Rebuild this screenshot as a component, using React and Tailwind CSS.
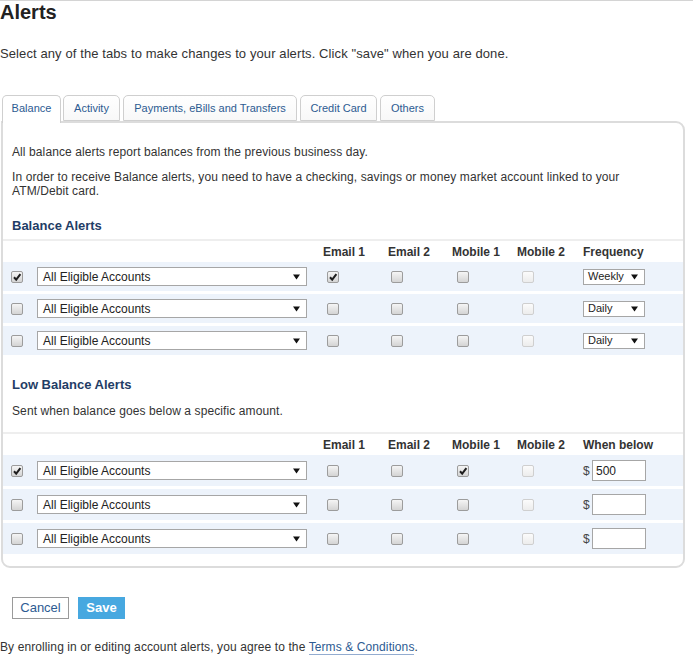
import React from "react";

const font = "font-['Liberation_Sans',Arial,sans-serif]";

function Box({ checked = false, disabled = false }) {
  return (
    <span
      className={
        "relative inline-block w-[12px] h-[12px] rounded-[2px] border bg-gradient-to-b " +
        (disabled
          ? "border-[#cfcfcf] from-[#fbfbfb] to-[#ececec]"
          : "border-[#9c9c9c] from-[#f5f5f5] to-[#d4d4d4]")
      }
    >
      {checked && (
        <svg className="absolute left-[0px] top-[0px]" width="10" height="10" viewBox="0 0 10 10">
          <path d="M2 5.2 L4.2 7.6 L8.4 2.2" fill="none" stroke="#1e1e1e" strokeWidth="2" strokeLinejoin="miter" />
        </svg>
      )}
    </span>
  );
}

function Arrow() {
  return (
    <svg width="7" height="6" viewBox="0 0 7 6">
      <path d="M0 0.5 L7 0.5 L3.5 5.5 Z" fill="#111" />
    </svg>
  );
}

function AccountSelect() {
  return (
    <div className="ml-[14px] w-[270px] h-[19px] border border-[#a6a6a6] bg-white flex items-center justify-between pl-[5px] pr-[6px] text-[12px] text-[#222]">
      <span>All Eligible Accounts</span>
      <Arrow />
    </div>
  );
}

function FreqSelect({ value }) {
  return (
    <div className="ml-[1px] w-[62px] h-[16px] border border-[#a6a6a6] bg-white flex items-center justify-between pl-[4px] pr-[6px] text-[11px] text-[#222]">
      <span>{value}</span>
      <Arrow />
    </div>
  );
}

function Cell({ children, w = "w-[65px]" }) {
  return <div className={w + " flex items-center"}>{children}</div>;
}

function Header({ last }) {
  return (
    <div className="flex items-center text-[12px] font-bold text-[#333]">
      <div className="w-[320px]" />
      <div className="w-[65px]">Email 1</div>
      <div className="w-[64px]">Email 2</div>
      <div className="w-[65px]">Mobile 1</div>
      <div className="w-[65px]">Mobile 2</div>
      <div className="ml-[1px]">{last}</div>
    </div>
  );
}

function Row({ h, first, e1, m1, right }) {
  return (
    <div className={h + " bg-[#edf3fb] flex items-center"}>
      <div className="w-[320px] flex items-center pl-[8px]">
        <Box checked={first} />
        <AccountSelect />
      </div>
      <Cell>
        <span className="ml-[4px] flex"><Box checked={e1} /></span>
      </Cell>
      <Cell w="w-[64px]">
        <span className="ml-[3px] flex"><Box /></span>
      </Cell>
      <Cell>
        <span className="ml-[5px] flex"><Box checked={m1} /></span>
      </Cell>
      <Cell>
        <span className="ml-[5px] flex"><Box disabled /></span>
      </Cell>
      {right}
    </div>
  );
}

function Amount({ value }) {
  return (
    <div className="flex items-center text-[12px] text-[#444]">
      <span className="ml-[1px] w-[9px]">$</span>
      <div className="w-[54px] h-[21px] border border-[#a6a6a6] bg-white flex items-center pl-[3px] text-[12px] text-[#222]">
        {value}
      </div>
    </div>
  );
}

const tabs = [
  { label: "Balance", w: "w-[59px]", ml: "" },
  { label: "Activity", w: "w-[57px]", ml: "ml-[2px]" },
  { label: "Payments, eBills and Transfers", w: "w-[174px]", ml: "ml-[3px]" },
  { label: "Credit Card", w: "w-[77px]", ml: "ml-[3px]" },
  { label: "Others", w: "w-[55px]", ml: "ml-[3px]" },
];

export default function App() {
  return (
    <div className={font + " w-[693px] h-[667px] bg-white border-t border-[#d4d4d4] text-[#333]"}>
      <h1 className="text-[20px] leading-[23px] font-bold text-[#222]">Alerts</h1>
      <p className="mt-[22px] text-[13px] leading-[15px] tracking-[0.1px] text-[#333]">
        Select any of the tabs to make changes to your alerts. Click "save" when you are done.
      </p>

      <div className="mt-[34px] flex items-start pl-[2px] h-[28px] -mb-[2px] relative z-10">
        {tabs.map((t, i) => (
          <div
            key={t.label}
            className={
              t.w +
              " " +
              t.ml +
              " flex items-center justify-center text-[11px] text-[#2d5b92] border border-[#cfcfcf] rounded-t-[5px] " +
              (i === 0
                ? "h-[28px] border-b-0 bg-white pb-[2px]"
                : "h-[26px] bg-gradient-to-b from-white to-[#f8f8f8]")
            }
          >
            {t.label}
          </div>
        ))}
      </div>

      <div className="ml-[1px] w-[684px] border-2 border-[#dcdcdc] rounded-tr-[9px] rounded-b-[9px] pb-[12px]">
        <p className="pl-[9px] pt-[22px] text-[12px] leading-[14px] tracking-[0.1px]">
          All balance alerts report balances from the previous business day.
        </p>
        <p className="pl-[9px] mt-[11px] text-[12px] leading-[14px] tracking-[0.1px]">
          In order to receive Balance alerts, you need to have a checking, savings or money market account linked to your
          <br />
          ATM/Debit card.
        </p>
        <h2 className="pl-[9px] mt-[20px] text-[13px] leading-[16px] font-bold text-[#1f3d66]">Balance Alerts</h2>
        <div className="mt-[5px] h-[2px] bg-[#eeeeee]" />
        <div className="h-[21px] flex items-center">
          <Header last="Frequency" />
        </div>
        <div className="flex flex-col gap-[3px]">
          <Row h="h-[29px]" first e1 right={<FreqSelect value="Weekly" />} />
          <Row h="h-[29px]" right={<FreqSelect value="Daily" />} />
          <Row h="h-[29px]" right={<FreqSelect value="Daily" />} />
        </div>

        <h2 className="pl-[9px] mt-[22px] text-[13px] leading-[16px] font-bold text-[#1f3d66]">Low Balance Alerts</h2>
        <p className="pl-[9px] mt-[11px] text-[12px] leading-[14px] tracking-[0.1px]">Sent when balance goes below a specific amount.</p>
        <div className="mt-[14px] h-[2px] bg-[#eeeeee]" />
        <div className="h-[21px] flex items-center">
          <Header last="When below" />
        </div>
        <div className="flex flex-col gap-[3px]">
          <Row h="h-[31px]" first m1 right={<Amount value="500" />} />
          <Row h="h-[31px]" right={<Amount value="" />} />
          <Row h="h-[31px]" right={<Amount value="" />} />
        </div>
      </div>

      <div className="mt-[29px] ml-[12px] flex gap-[9px]">
        <button className="w-[57px] h-[22px] border border-[#9a9a9a] bg-white text-[13px] text-[#2d5b92] flex items-center justify-center">
          Cancel
        </button>
        <button className="w-[47px] h-[22px] bg-[#47a8e0] text-[13px] font-bold text-white flex items-center justify-center">
          Save
        </button>
      </div>

      <p className="mt-[21px] text-[12px] leading-[14px] tracking-[0.1px] text-[#333]">
        By enrolling in or editing account alerts, you agree to the{" "}
        <span className="text-[#2d5b92] border-b border-[#93acd0]">Terms &amp; Conditions</span>.
      </p>
    </div>
  );
}
